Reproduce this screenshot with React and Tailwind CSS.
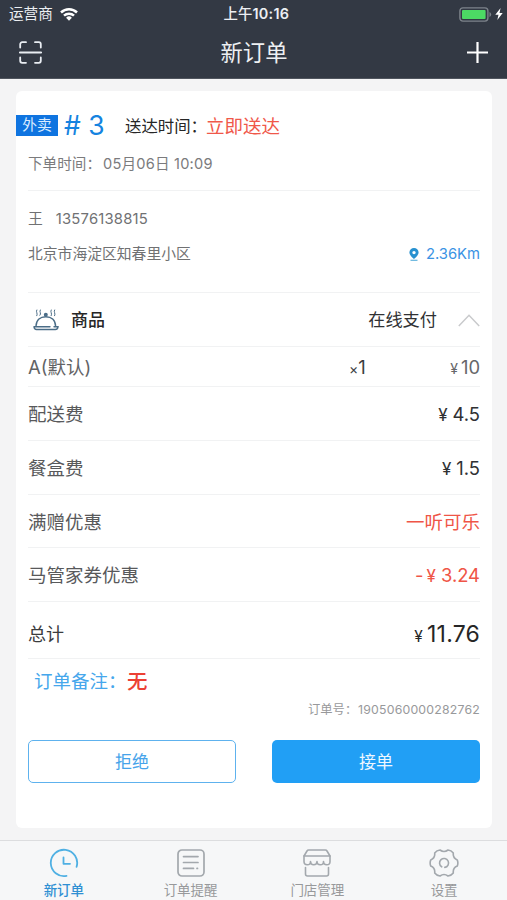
function StatusBar() {
  return (
    <div className="flex h-[27px] items-center justify-between pt-[1px] pl-[9px] pr-[4px] text-[#eceff3]">
      <div className="flex w-[150px] items-center gap-[7px]">
        <span className="text-[14.6px] leading-none">运营商</span>
        <svg className="h-[13px] w-[18px]" viewBox="0 0 18 13" fill="none" stroke="white" strokeWidth="2.5">
          <path d="M1 4.5a11.5 11.5 0 0 1 16 0" />
          <path d="M4 7.7a7.2 7.2 0 0 1 10 0" />
          <path d="M9 12.8l-2.9-3a4.1 4.1 0 0 1 5.8 0z" fill="white" stroke="none" />
        </svg>
      </div>
      <div className="pl-[1px] text-[14.4px] font-medium leading-none whitespace-nowrap">上午<span className="font-semibold tracking-[0.3px]">10:16</span></div>
      <div className="flex w-[150px] items-center justify-end gap-[3px]">
        <svg className="h-[15px] w-[33px]" viewBox="0 0 33 15" fill="none">
          <rect x="0.9" y="0.9" width="28" height="13.2" rx="3" stroke="#7d838b" strokeWidth="1.4" />
          <rect x="3" y="3" width="23.6" height="9" rx="1" fill="#4cd964" />
          <path d="M30.5 5v5q1.7-.8 1.7-2.5T30.5 5z" fill="#7d838b" />
        </svg>
        <svg className="h-[12px] w-[8px]" viewBox="0 0 8 12" fill="white">
          <path d="M5.6 0L.3 6.8h3.2L2.3 12l5.4-7H4.5z" />
        </svg>
      </div>
    </div>
  );
}

function NavBar() {
  return (
    <div className="flex h-[51px] items-center justify-between pl-[19px] pr-[18px]">
      <svg className="h-[23px] w-[23px]" viewBox="0 0 23 23" fill="none" stroke="#e9edf2" strokeWidth="1.8" strokeLinecap="round">
        <path d="M1.2 6.5V3.2a2 2 0 0 1 2-2H7M16 1.2h3.8a2 2 0 0 1 2 2v3.3M1.2 16.5v3.3a2 2 0 0 0 2 2H7M16 21.8h3.8a2 2 0 0 0 2-2v-3.3" />
        <path d="M.8 11.5h21.4" />
      </svg>
      <div className="pt-[1px] text-[22.3px] leading-none text-[#eef0f3]">新订单</div>
      <svg className="h-[22px] w-[23px]" viewBox="0 0 23 22" stroke="white" strokeWidth="2.2">
        <path d="M1 10.500h21M11.500 0v21" />
      </svg>
    </div>
  );
}

function ClocheIcon() {
  return (
    <svg className="h-[22px] w-[26px]" viewBox="0 0 26 22" fill="none" stroke="#4b6d87" strokeWidth="1.4" strokeLinecap="round">
      <path d="M3 17.2C3.2 11 7.300 7.700 12.800 7.700S22.400 11 22.600 17.200" />
      <path d="M1 17.800h16M21 17.800h4q-.4 2.700-2.600 2.700H3.500Q1.200 20.500 1 17.800" />
      <circle cx="12.800" cy="5.800" r="1.300" fill="#4b6d87" />
      <path d="M3.800 1q-.7 1.300 0 2.700t0 3M7.300 1q-.7 1.300 0 2.700t-.4 2.600M18.200 1q-.7 1.300 0 2.700t0 3M21.600 1q-.7 1.300 0 2.700t0 3" strokeWidth="1" />
    </svg>
  );
}

function FeeRow({ label, value, red, height }) {
  return (
    <div className={`flex shrink-0 items-center justify-between border-b border-[#f1f2f3] pt-[3px] ${height}`}>
      <span className="text-[18.5px] text-[#58595b]">{label}</span>
      <span className={`text-[18.5px] ${red ? "text-[#ef5547]" : "text-[#303133]"}`}>{value}</span>
    </div>
  );
}

function Price({ amount }) {
  return (
    <span className="flex items-baseline gap-[5px]">
      <span className="text-[17px]">¥</span>
      <span className="text-[18.4px]">{amount}</span>
    </span>
  );
}

function Tab({ label, active, children }) {
  return (
    <div className={`flex flex-1 flex-col items-center pt-[7px] pl-[1px] ${active ? "text-[#2f8fd3]" : "text-[#98999b]"}`}>
      <svg className="h-[30px] w-[30px]" viewBox="0 0 30 30" fill="none" stroke={active ? "#4fb0e3" : "#a3a8ad"} strokeWidth="1.6" strokeLinecap="round" strokeLinejoin="round">
        {children}
      </svg>
      <span className={`mt-[5px] text-[13.5px] leading-[14px] ${active ? "font-medium" : ""}`}>{label}</span>
    </div>
  );
}

export default function App() {
  return (
    <div className="flex h-[900px] w-[507px] flex-col overflow-hidden bg-[#f4f4f5] font-['Inter','Noto_Sans_CJK_SC',sans-serif]">
      <header className="h-[79px] shrink-0 border-b border-[#50555e] bg-[#333944]">
        <StatusBar />
        <NavBar />
      </header>

      <main className="ml-[16px] mt-[12px] flex h-[737px] w-[476px] shrink-0 flex-col rounded-[6px] bg-white px-[12px] pt-[1px]">
        <section className="h-[99px] shrink-0 border-b border-[#f1f2f3]">
          <div className="-ml-[12px] flex h-[66px] items-center whitespace-nowrap">
            <span className="flex h-[21px] w-[42px] items-center justify-center bg-[#0f74e0] pt-[1px] text-[14.8px] leading-none text-[#d9ebff]">外卖</span>
            <span className="ml-[6px] w-[61px] text-[26.5px] leading-none text-[#1583e0]"># 3</span>
            <span className="w-[81px] pt-[2px] text-[16.4px] leading-none text-[#262626]">送达时间：</span>
            <span className="pt-[2px] text-[18.5px] leading-none text-[#f0584a]">立即送达</span>
          </div>
          <div className="flex h-[14px] items-center text-[14.6px] text-[#7b7b7d]">
            <span className="w-[75px] whitespace-nowrap">下单时间：</span>
            <span className="tracking-[0.2px]">05月06日 10:09</span>
          </div>
        </section>

        <section className="h-[102px] shrink-0 border-b border-[#f1f2f3] text-[14.8px] text-[#707173]">
          <div className="flex h-[56px] items-center gap-[13px]">
            <span>王</span>
            <span className="tracking-[0.2px]">13576138815</span>
          </div>
          <div className="flex h-[14px] items-center justify-between">
            <span>北京市海淀区知春里小区</span>
            <span className="flex items-center gap-[7px] text-[#3b93e4]">
              <svg className="h-[13px] w-[10px]" viewBox="0 0 10 13">
                <path fillRule="evenodd" fill="#2791d0" d="M5 0a4.600 4.600 0 0 1 4.600 4.600C9.600 7.500 5 11 5 11S.4 7.500.4 4.600A4.600 4.600 0 0 1 5 0zm0 2.900a1.700 1.700 0 1 0 0 3.400 1.700 1.700 0 0 0 0-3.400z" />
                <path d="M1.500 12.300h7" stroke="#63b4dd" strokeWidth="1.200" />
              </svg>
              2.36Km
            </span>
          </div>
        </section>

        <section className="flex h-[54px] shrink-0 items-center border-b border-[#f1f2f3] pl-[5px]">
          <ClocheIcon />
          <span className="ml-[12px] flex-1 pt-[2px] text-[17px] font-medium text-[#262626]">商品</span>
          <span className="pt-[1px] text-[17.2px] text-[#303133]">在线支付</span>
          <svg className="ml-[21px] mt-[1px] h-[13px] w-[22px]" viewBox="0 0 22 13" fill="none" stroke="#c9cacc" strokeWidth="1.500">
            <path d="M.8 12L11 1.300 21.200 12" />
          </svg>
        </section>

        <section className="flex h-[40px] shrink-0 items-center border-b border-[#f1f2f3] pt-[2px] text-[18.4px]">
          <span className="w-[321px] text-[18.5px] text-[#626365]">A(默认)</span>
          <span className="flex-1 text-[#3b3c3e]"><span className="text-[14px]">×</span>1</span>
          <span className="flex items-baseline gap-[3px] text-[#66676a]"><span className="text-[14px]">¥</span>10</span>
        </section>

        <FeeRow height="h-[54px]" label="配送费" value={<Price amount="4.5" />} />
        <FeeRow height="h-[54px]" label="餐盒费" value={<Price amount="1.5" />} />
        <FeeRow height="h-[53px]" label="满赠优惠" value="一听可乐" red />
        <FeeRow height="h-[54px]" label="马管家券优惠" value={<span className="flex items-baseline gap-[3px]"><span>-</span><Price amount="3.24" /></span>} red />

        <section className="flex h-[57px] shrink-0 items-center justify-between border-b border-[#f1f2f3] pt-[8px]">
          <span className="text-[18px] text-[#3b3c3e]">总计</span>
          <span className="flex items-baseline gap-[4px] text-[23px] tracking-[0.2px] text-[#262626]"><span className="text-[15.5px]">¥</span>11.76</span>
        </section>

        <div className="flex h-[46px] shrink-0 items-center pl-[6px]">
          <span className="w-[93px] whitespace-nowrap text-[18.5px] text-[#46a7ec]">订单备注：</span>
          <span className="text-[20.5px] font-medium text-[#ec4034]">无</span>
        </div>
        <div className="flex h-[10px] shrink-0 items-center justify-end text-[12.3px] text-[#98999b]">
          <span className="w-[50px] whitespace-nowrap">订单号：</span>
          <span className="tracking-[0.2px]">1905060000282762</span>
        </div>

        <div className="mt-[25px] flex h-[43px] shrink-0 justify-between">
          <button className="w-[208px] rounded-[5px] border-[1.5px] border-[#5eb2ee] pt-[2px] text-[17px] text-[#46a3ea]">拒绝</button>
          <button className="w-[208px] rounded-[5px] bg-[#219ff5] pt-[2px] text-[17px] text-[#eef7ff]">接单</button>
        </div>
      </main>

      <nav className="mt-auto flex h-[60px] shrink-0 border-t border-[#dcdddf] bg-[#f6f7f8]">
        <Tab label="新订单" active>
          <path d="M17.500 27.900A13.200 13.200 0 1 1 27.600 18.800" strokeWidth="1.800" />
          <path d="M14.500 9.500v6.300h6.500" strokeWidth="1.800" />
        </Tab>
        <Tab label="订单提醒">
          <rect x="2" y="2" width="26" height="26" rx="4" strokeWidth="1.700" />
          <path d="M7.500 8.600h14.500M7.500 14.500h14.500M7.500 20.400h10M21 20.400h.5" strokeWidth="1.700" />
        </Tab>
        <Tab label="门店管理">
          <path d="M6.600 2h16.800q1 0 1.600 1l3 5H2l3-5q.6-1 1.600-1z" />
          <path d="M2 8v5.500q0 3.300 3.300 3.300t3.200-3.300q0 3.300 3.200 3.300t3.300-3.300q0 3.300 3.300 3.300t3.200-3.300q0 3.300 3.300 3.300T28 13.500V8" />
          <path d="M3.500 19.500v6.500q0 2 2 2h19q2 0 2-2v-6.500" />
        </Tab>
        <Tab label="设置">
          <path d="M19 2Q22.300 2.400 24.300 5.050Q23.700 10 28.250 11.900Q29.500 15 28.250 18.100Q23.700 20 24.300 24.950Q22.300 27.600 19 28Q15 25 11 28Q7.700 27.600 5.700 24.950Q6.300 20 1.750 18.100Q.5 15 1.750 11.900Q6.300 10 5.700 5.050Q7.700 2.400 11 2Q15 5 19 2z" />
          <path d="M12.700 18.800A4.500 4.500 0 1 1 15.800 19.400" />
        </Tab>
      </nav>
    </div>
  );
}
